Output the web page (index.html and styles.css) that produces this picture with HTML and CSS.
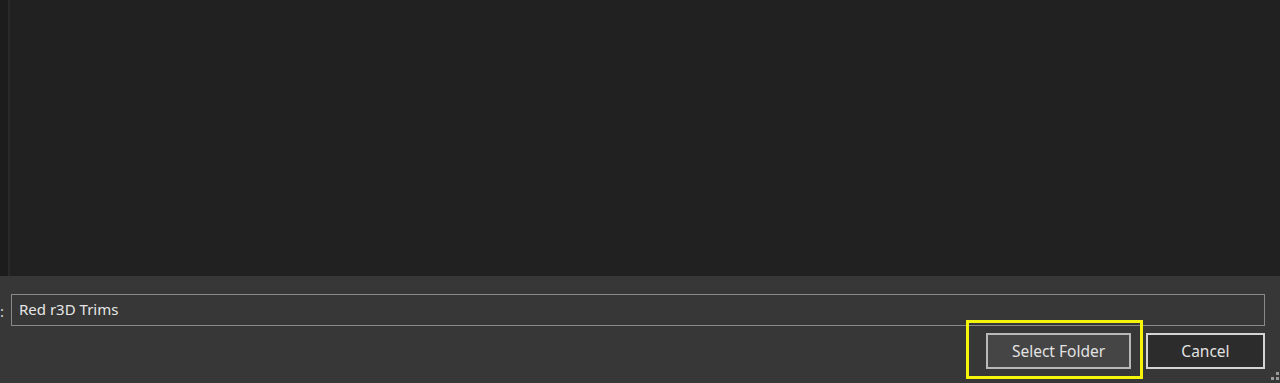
FILE: index.html
```html
<!DOCTYPE html>
<html lang="en">
<head>
  <meta charset="UTF-8" />
  <title>Select Folder</title>
  <link rel="stylesheet" href="styles.css">
</head>
<body>
  <div class="dialog">
    <!-- folder list area -->
    <div class="browser">
      <div class="nav-pane"></div>
      <div class="nav-edge"></div>
      <div class="file-list"></div>
    </div>

    <!-- bottom panel -->
    <div class="footer">
      <div class="name-row">
        <span class="name-label">:</span>
        <input type="text" class="name-input" value="Red r3D Trims" />
      </div>
      <div class="button-row">
        <div class="highlight-wrap">
          <button class="btn btn-primary">Select Folder</button>
          <div class="highlight"></div>
        </div>
        <button class="btn btn-cancel">Cancel</button>
      </div>
      <div class="grip">
        <span class="dot d1"></span>
        <span class="dot d2"></span>
        <span class="dot d3"></span>
      </div>
    </div>
  </div>
</body>
</html>
```

FILE: styles.css
```css
html, body {
  margin: 0;
  padding: 0;
  background: #212121;
}
body {
  font-family: "Noto Sans", "Open Sans", sans-serif;
  width: 1280px;
  height: 383px;
  overflow: hidden;
}
.dialog {
  display: flex;
  flex-direction: column;
  height: 383px;
}
.browser {
  display: flex;
  height: 276px;
  flex: none;
}
.nav-pane {
  width: 8px;
  background: #1c1c1c;
}
.nav-edge {
  width: 2px;
  background: #292929;
}
.file-list {
  flex: 1;
  background: #212121;
}
.footer {
  position: relative;
  flex: 1;
  background: #373737;
  padding-top: 18px;
  padding-right: 15px;
}
.name-row {
  display: flex;
  align-items: center;
  height: 32px;
}
.name-label {
  width: 11px;
  color: #d6d6d6;
  font-size: 15px;
  line-height: 32px;
  margin-top: 2px;
}
.name-input {
  flex: 1;
  box-sizing: border-box;
  height: 32px;
  margin: 0;
  border: 1px solid #8a8a8a;
  background: #373737;
  color: #e6e6e6;
  font-family: "Noto Sans", "Open Sans", sans-serif;
  font-size: 15px;
  padding: 0 0 3px 7px;
  outline: none;
}
.button-row {
  display: flex;
  justify-content: flex-end;
  gap: 15px;
  margin-top: 7px;
}
.highlight-wrap {
  position: relative;
  display: flex;
}
.btn {
  box-sizing: border-box;
  height: 36px;
  margin: 0;
  border: 2px solid #c4c4c4;
  color: #e2e2e2;
  font-family: "Noto Sans", "Open Sans", sans-serif;
  font-size: 15.5px;
  padding: 0 0 1px 0;
}
.btn-primary {
  width: 145px;
  background: #454545;
  border-color: #b8b8b8;
}
.btn-cancel {
  width: 119px;
  background: #2c2c2c;
  border-color: #d4d4d4;
}
.highlight {
  position: absolute;
  left: -20px;
  top: -13px;
  right: -12px;
  bottom: -10px;
  border: 3px solid #f5f50a;
  pointer-events: none;
}
.grip {
  position: absolute;
  right: 0;
  bottom: 0;
  width: 9px;
  height: 12px;
}
.dot {
  position: absolute;
  width: 3px;
  height: 3px;
  background: #9a9a9a;
}
.d1 { right: 1px; top: 1px; }
.d2 { right: 1px; top: 6px; }
.d3 { right: 6px; top: 6px; }
```
